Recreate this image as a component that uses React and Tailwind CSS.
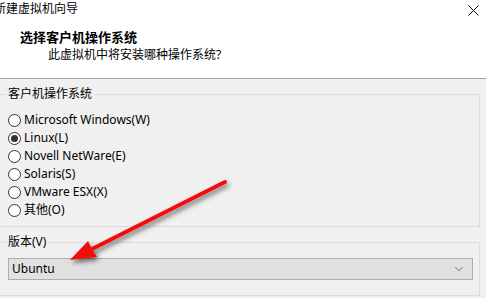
import { ChevronDown } from 'lucide-react'

const FONT = "font-['Noto_Sans','Noto_Sans_CJK_SC',sans-serif]"

const options = [
  { label: 'Microsoft Windows(W)', checked: false },
  { label: 'Linux(L)', checked: true },
  { label: 'Novell NetWare(E)', checked: false },
  { label: 'Solaris(S)', checked: false },
  { label: 'VMware ESX(X)', checked: false },
  { label: '其他(O)', checked: false },
]

function Radio({ checked }) {
  return (
    <span className="w-[13px] h-[13px] rounded-full border border-[#333333] bg-white flex items-center justify-center shrink-0">
      {checked && <span className="w-[7px] h-[7px] rounded-full bg-[#333333]" />}
    </span>
  )
}

export default function App() {
  return (
    <div className={`relative w-[486px] h-[298px] overflow-hidden bg-[#f0f0f0] text-black text-[12px] ${FONT}`}>

      {/* Header */}
      <div className="bg-white h-[78px]">
        <div className="h-[18px] flex items-center justify-between">
          <span className="ml-[-6px] leading-[16px]">新建虚拟机向导</span>
          <svg width="11" height="11" viewBox="0 0 11 11" className="mr-[7px] mt-[2px]">
            <path d="M0.5 0.5 L10.5 10.5 M10.5 0.5 L0.5 10.5" stroke="#111" strokeWidth="1" />
          </svg>
        </div>
        <div className="pl-[20px] mt-[11px] leading-[16px] font-bold text-[13px]">选择客户机操作系统</div>
        <div className="pl-[48px] mt-[2px] leading-[16px]">此虚拟机中将安装哪种操作系统?</div>
      </div>
      <div className="h-px bg-[#a0a0a0]" />

      {/* Body */}
      <div className="pt-[7px]">
        <fieldset className="ml-[-2px] w-[482px] border border-[#dcdcdc] pl-[7px] pr-[6px] pb-[7px]">
          <legend className="px-[2px] leading-[16px]">客户机操作系统</legend>
          <div className="ml-[2px] pt-[9px] flex flex-col">
            {options.map(o => (
              <div key={o.label} className="h-[18px] flex items-center gap-[3px]">
                <Radio checked={o.checked} />
                <span className="leading-[16px]">{o.label}</span>
              </div>
            ))}
          </div>
        </fieldset>

        <fieldset className="mt-[7px] ml-[-2px] w-[482px] border border-[#dcdcdc] pl-[7px] pr-[6px] pb-[15px]">
          <legend className="px-[2px] leading-[16px]">版本(V)</legend>
          <div className="ml-[2px] mt-[8px] h-[22px] border border-[#adadad] bg-[#e1e1e1] flex items-center justify-between pl-[3px] pr-[6px]">
            <span className="leading-[16px]">Ubuntu</span>
            <ChevronDown size={14} strokeWidth={1.2} className="text-[#333]" />
          </div>
        </fieldset>
      </div>

      {/* Red annotation arrow */}
      <svg className="absolute inset-0 pointer-events-none" width="486" height="298" viewBox="0 0 486 298">
        <defs>
          <filter id="sh" x="-20%" y="-20%" width="140%" height="160%">
            <feDropShadow dx="2" dy="3" stdDeviation="2.5" floodColor="#000" floodOpacity="0.55" />
          </filter>
        </defs>
        <g filter="url(#sh)">
          <line x1="225" y1="182" x2="90" y2="250" stroke="#f21010" strokeWidth="4" strokeLinecap="round" />
          <path d="M70 260 L88 241 L92 249 L97 257 Z" fill="#f21010" />
        </g>
      </svg>
    </div>
  )
}
